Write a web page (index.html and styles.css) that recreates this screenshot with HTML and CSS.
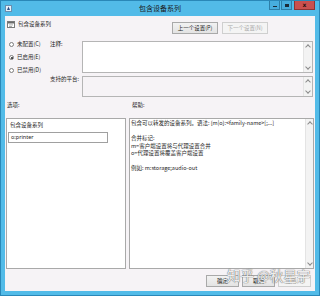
FILE: index.html
```html
<!DOCTYPE html>
<html lang="zh-CN">
<head>
  <meta charset="UTF-8">
  <meta name="viewport" content="width=device-width, initial-scale=1.0">
  <title>包含设备系列</title>
  <link rel="stylesheet" href="styles.css">
</head>
<body>

  <div class="window">
      <div class="titlebar">
          <svg class="app-icon" viewBox="0 0 7 7" width="7" height="7">
              <rect x="0.5" y="0.5" width="6" height="6" fill="#e8f2fa" stroke="#6a8fb0" stroke-width="1"/>
              <path d="M2 5 L3.5 1.5 L5 5 Z" fill="#2c4f86"/>
          </svg>
          <span class="title">包含设备系列</span>
          <div class="controls">
              <span class="ctl ctl-min"><i></i></span>
              <span class="ctl ctl-max"><i></i></span>
              <span class="ctl ctl-close">x</span>
          </div>
      </div>

      <div class="client">
          <div class="header">
              <div class="policy-name">
                  <svg viewBox="0 0 8 7" width="8" height="7">
                      <rect x="0.5" y="0.5" width="7" height="6" fill="#ffffff" stroke="#7a7a7a" stroke-width="1"/>
                      <rect x="1" y="1" width="6" height="1.5" fill="#6a6a6a"/>
                      <rect x="2" y="3.5" width="4" height="0.8" fill="#9a9a9a"/>
                      <rect x="2" y="5" width="3" height="0.8" fill="#9a9a9a"/>
                  </svg>
                  <span>包含设备系列</span>
              </div>
              <div class="nav">
                  <button class="btn">上一个设置(P)</button>
                  <button class="btn" disabled>下一个设置(N)</button>
              </div>
          </div>

          <div class="settings">
              <div class="radios">
                  <label class="radio"><span class="dot"></span>未配置(C)</label>
                  <label class="radio"><span class="dot checked"></span>已启用(E)</label>
                  <label class="radio"><span class="dot"></span>已禁用(D)</label>
              </div>
              <span class="field-label">注释:</span>
              <div class="box comment">
                  <div class="scroll"><span class="arrow up"></span><span class="arrow down"></span></div>
              </div>
              <span class="field-label">支持的平台:</span>
              <div class="box platform">
                  <div class="scroll"><span class="arrow up"></span><span class="arrow down"></span></div>
              </div>
          </div>

          <div class="pane-labels">
              <span class="options-label">选项:</span>
              <span>帮助:</span>
          </div>

          <div class="panes">
              <div class="pane options">
                  <div class="option-title">包含设备系列</div>
                  <div class="option-input">o:printer</div>
              </div>
              <div class="pane help">
                  <div class="help-text">
                      <p>包含可以转发的设备系列。语法: {m|o}:&lt;family-name&gt;[;...]</p>
                      <p>&nbsp;</p>
                      <p>合并标记:</p>
                      <p>m=客户端设置将与代理设置合并</p>
                      <p>o=代理设置将覆盖客户端设置</p>
                      <p>&nbsp;</p>
                      <p>例如: m:storage;audio-out</p>
                  </div>
                  <div class="scroll"><span class="arrow up"></span><span class="arrow down"></span></div>
              </div>
          </div>

          <div class="footer">
              <button class="btn">确定</button>
              <button class="btn">取消</button>
              <button class="btn" disabled>应用(A)</button>
          </div>

          <div class="watermark">知乎 @秋星宇</div>
      </div>
  </div>

</body>
</html>
```

FILE: styles.css
```css
body {
  margin: 0;
  font-family: "Noto Sans CJK SC", "Noto Sans", sans-serif;
  font-size: 5.5px;
  color: #1e1e1e;
}

.window {
  width: 320px;
  height: 296px;
  box-sizing: border-box;
  border: 1px solid #2a88b8;
  background: #52bbe8;
  padding: 0 4px 4px 4px;
  display: flex;
  flex-direction: column;
}

.titlebar {
  height: 15px;
  display: flex;
  align-items: flex-start;
  position: relative;
  margin: 0 -4px;
}

.app-icon {
  margin: 4px 0 0 4px;
}

.title {
  position: absolute;
  left: 0;
  right: 0;
  top: 3px;
  text-align: center;
  font-size: 7px;
  line-height: 9px;
  color: #1a1a1a;
}

.controls {
  margin-left: auto;
  margin-right: 4px;
  display: flex;
  gap: 1px;
  position: relative;
}

.ctl {
  height: 9px;
  box-sizing: border-box;
  display: flex;
  align-items: center;
  justify-content: center;
}

.ctl-min,
.ctl-max {
  width: 11px;
  background: #47aede;
  border: 1px solid #2d7fa8;
  border-top: none;
}

.ctl-min i {
  width: 4px;
  height: 1px;
  margin-top: 3px;
  background: #1b2b38;
}

.ctl-max i {
  width: 4px;
  height: 3px;
  border: 1px solid #1b2b38;
  border-top-width: 2px;
  box-sizing: border-box;
}

.ctl-close {
  width: 21px;
  margin-left: 1px;
  background: #c9504f;
  border: 1px solid #8e3434;
  border-top: none;
  color: #2a1010;
  font-family: "DejaVu Sans", sans-serif;
  font-size: 6px;
  font-weight: bold;
  line-height: 8px;
}

.client {
  flex: 1;
  background: #f6f3f6;
  position: relative;
  display: flex;
  flex-direction: column;
}

.header {
  height: 21px;
  display: flex;
  align-items: flex-start;
}

.policy-name {
  display: flex;
  align-items: center;
  gap: 3px;
  margin: 4px 0 0 2px;
  line-height: 8px;
}

.nav {
  display: flex;
  gap: 4px;
  margin: 6px 47px 0 auto;
}

.btn {
  height: 12px;
  padding: 0;
  border: 1px solid #a9a9a9;
  background: linear-gradient(#f2f2f2, #e3e3e3);
  font-family: inherit;
  font-size: 5.5px;
  color: #1e1e1e;
  line-height: 10px;
}

.nav .btn {
  width: 46px;
}

.btn:disabled {
  border-color: #cfcfcf;
  background: #f4f4f4;
  color: #a8a8a8;
}

.settings {
  margin-top: 4px;
  display: grid;
  grid-template-columns: 45px 32px 231px;
  grid-template-rows: 32px 21px;
  row-gap: 3px;
  line-height: 7px;
}

.radios {
  grid-row: 1 / 3;
  display: flex;
  flex-direction: column;
  gap: 6px;
  padding-left: 4px;
}

.radio {
  display: flex;
  align-items: center;
  gap: 3px;
  height: 7px;
}

.dot {
  width: 5px;
  height: 5px;
  box-sizing: border-box;
  border: 1px solid #7d7d7d;
  border-radius: 50%;
  background: #fff;
  display: flex;
  align-items: center;
  justify-content: center;
}

.dot.checked::after {
  content: "";
  width: 2px;
  height: 2px;
  border-radius: 50%;
  background: #1e1e1e;
}

.field-label {
  line-height: 7px;
}

.box {
  border: 1px solid #b5b5b5;
  display: flex;
  justify-content: flex-end;
}

.comment {
  background: #ffffff;
}

.platform {
  background: #f6f3f6;
}

.scroll {
  width: 8px;
  border-left: 1px solid #e4e4e4;
  background: #f3f3f3;
  display: flex;
  flex-direction: column;
  justify-content: space-between;
  align-items: center;
  padding: 2px 0;
}

.arrow {
  width: 3px;
  height: 3px;
  border: solid #8a8a8a;
  border-width: 1px 0 0 1px;
  transform: rotate(45deg);
}

.arrow.up {
  margin-top: 1px;
}

.arrow.down {
  transform: rotate(225deg);
  margin-bottom: 1px;
}

.pane-labels {
  margin-top: 5px;
  height: 7px;
  line-height: 7px;
  display: flex;
}

.options-label {
  width: 125px;
  padding-left: 2px;
}

.panes {
  margin-top: 9px;
  height: 151px;
  display: flex;
  gap: 3px;
  padding: 0 1px;
}

.pane {
  border: 1px solid #a9a9a9;
  background: #ffffff;
  box-sizing: border-box;
}

.options {
  width: 120px;
  padding: 3px 0 0 1px;
}

.option-title {
  line-height: 7px;
  padding-left: 2px;
}

.option-input {
  margin-top: 3px;
  width: 100px;
  height: 11px;
  box-sizing: border-box;
  border: 1px solid #a0a0a0;
  padding-left: 2px;
  line-height: 9px;
  font-family: "Noto Sans", sans-serif;
}

.help {
  flex: 1;
  display: flex;
}

.help-text {
  flex: 1;
  padding: 1px 1px;
  line-height: 7.5px;
}

.help-text p {
  margin: 0;
  white-space: nowrap;
}

.help .scroll {
  width: 7px;
}

.footer {
  margin-top: 6px;
  display: flex;
  justify-content: flex-end;
  gap: 3px;
  padding-right: 4px;
}

.footer .btn {
  width: 33px;
}

.watermark {
  position: absolute;
  left: 222px;
  top: 251px;
  font-size: 13.5px;
  line-height: 16px;
  color: rgba(255, 255, 255, 0.9);
  text-shadow: 0 0 1px #6e6e6e, 0 0 1px #6e6e6e;
  white-space: nowrap;
}
```
